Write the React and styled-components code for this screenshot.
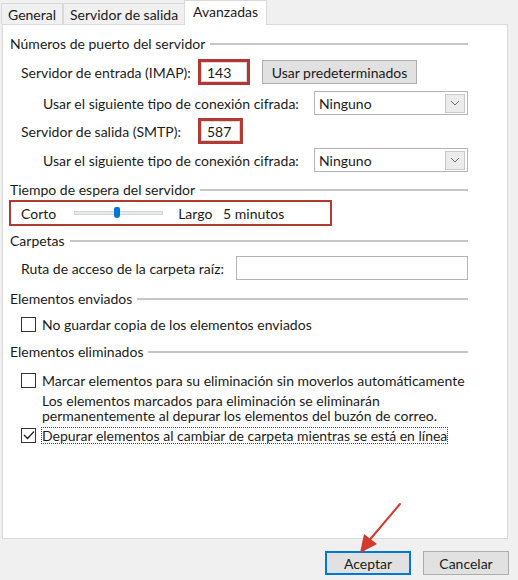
import React from 'react';
import styled, { createGlobalStyle } from 'styled-components';

const GlobalStyle = createGlobalStyle`
  html, body {
    margin: 0;
    padding: 0;
    background: #f0f0f0;
  }
  * { box-sizing: border-box; }
`;

const RED = '#b33a33';

// --- Frame ---
const Dialog = styled.div`
  position: relative;
  width: 518px;
  height: 580px;
  background: #f0f0f0;
  font-family: Lato, 'Noto Sans', sans-serif;
  font-size: 14px;
  color: #1b1b1b;
  overflow: hidden;
`;

const TabStrip = styled.div`
  display: flex;
  align-items: flex-end;
  height: 24px;
  padding-left: 1px;
`;

const Tab = styled.div`
  display: flex;
  align-items: center;
  height: ${(p) => (p.$active ? '25px' : '21px')};
  padding: 0 ${(p) => (p.$active ? '8px' : '6px')};
  padding-bottom: ${(p) => (p.$active ? '3px' : '0')};
  background: ${(p) => (p.$active ? '#ffffff' : '#f0f0f0')};
  border: 1px solid #d9d9d9;
  border-bottom: none;
  margin-left: ${(p) => (p.$active ? '-1px' : '0')};
  margin-bottom: ${(p) => (p.$active ? '-1px' : '0')};
  position: relative;
  z-index: ${(p) => (p.$active ? 2 : 1)};
  & + & { border-left: ${(p) => (p.$active ? '1px solid #d9d9d9' : 'none')}; }
`;

const Panel = styled.div`
  margin-left: 2px;
  width: 506px;
  height: 515px;
  background: #ffffff;
  border: 1px solid #d9d9d9;
  padding: 10px 39px 0 7px;
`;

// --- Group headers ---
const GroupHeader = styled.div`
  display: flex;
  align-items: center;
  gap: 5px;
  height: 16px;
  margin-top: ${(p) => p.$top || 0}px;
  &::after {
    content: '';
    flex: 1;
    height: 2px;
    background: #c6c6c6;
    margin-top: 1px;
  }
`;

// --- Rows ---
const Row = styled.div`
  display: flex;
  align-items: center;
  height: ${(p) => p.$h || 24}px;
  margin-top: ${(p) => p.$top || 0}px;
  padding-left: ${(p) => p.$indent || 0}px;
`;

const Label = styled.span`
  flex: none;
  width: ${(p) => (p.$w ? `${p.$w}px` : 'auto')};
  white-space: nowrap;
`;

const TextBox = styled.div`
  display: flex;
  align-items: center;
  width: ${(p) => p.$w}px;
  height: ${(p) => (p.$hl ? 26 : 24)}px;
  padding-left: ${(p) => (p.$hl ? 6 : 4)}px;
  background: #fff;
  border: ${(p) => (p.$hl ? `3px solid ${RED}` : '1px solid #b4b4b4')};
  box-shadow: ${(p) => (p.$hl ? 'inset 0 0 0 1px #d9d9d9' : 'none')};
`;

const PushButton = styled.div`
  display: flex;
  align-items: center;
  justify-content: center;
  width: ${(p) => p.$w}px;
  height: 24px;
  margin-left: ${(p) => p.$left || 0}px;
  background: #e1e1e1;
  border: ${(p) => (p.$default ? '2px solid #0078d7' : '1px solid #adadad')};
`;

const Select = styled.div`
  display: flex;
  align-items: center;
  justify-content: space-between;
  width: 155px;
  height: 24px;
  padding: 0 2px 0 4px;
  background: #fff;
  border: 1px solid #b4b4b4;
`;

const DropButton = styled.div`
  display: flex;
  align-items: center;
  justify-content: center;
  width: 20px;
  height: 19px;
  background: #ececec;
  border: 1px solid #c9c9c9;
  color: #707070;
`;

// --- Slider ---
const SliderGroup = styled.div`
  display: flex;
  align-items: center;
  width: 323px;
  height: 26px;
  margin: 3px 0 0 -1px;
  padding-left: 10px;
  border: 2px solid ${RED};
`;

const Track = styled.div`
  position: relative;
  width: 89px;
  height: 4px;
  margin: 0 15px 0 ${(p) => p.$gap}px;
  background: #e7eaea;
  border: 1px solid #d6d6d6;
`;

const Thumb = styled.div`
  position: absolute;
  top: -5px;
  width: 6px;
  height: 11px;
  border-radius: 2px 2px 3px 3px;
  background: #0078d7;
`;

// --- Check boxes ---
const CheckRow = styled.div`
  display: flex;
  align-items: center;
  gap: 5px;
  height: 18px;
  margin-top: ${(p) => p.$top || 0}px;
  padding-left: 11px;
`;

const Box = styled.div`
  display: flex;
  align-items: center;
  justify-content: center;
  flex: none;
  width: 15px;
  height: 15px;
  background: #fff;
  border: 1px solid #333;
`;

const CheckText = styled.span`
  white-space: nowrap;
  padding: 0 1px;
  outline: ${(p) => (p.$focus ? '1px dotted #444' : 'none')};
  outline-offset: -1px;
`;

const Note = styled.div`
  margin: 4px 0 0 32px;
  line-height: 15px;
`;

// --- Footer ---
const Footer = styled.div`
  display: flex;
  justify-content: flex-end;
  gap: 12px;
  padding: 12px 9px 0 0;
`;

const Arrow = styled.svg`
  position: absolute;
  left: 350px;
  top: 498px;
  pointer-events: none;
`;

const Chevron = () => (
  <svg width="10" height="6" viewBox="0 0 10 6">
    <path d="M1 1 L5 5 L9 1" fill="none" stroke="#6f6f6f" strokeWidth="1" />
  </svg>
);

const Tick = () => (
  <svg width="12" height="10" viewBox="0 0 12 10">
    <path d="M1 5 L4.5 8.5 L11 1.5" fill="none" stroke="#222" strokeWidth="1.3" />
  </svg>
);

export default function App() {
  return (
    <Dialog>
      <GlobalStyle />
      <TabStrip>
        <Tab>General</Tab>
        <Tab>Servidor de salida</Tab>
        <Tab $active>Avanzadas</Tab>
      </TabStrip>

      <Panel>
        <GroupHeader>Números de puerto del servidor</GroupHeader>
        <Row $h={26} $top={8} $indent={11}>
          <Label $w={177}>Servidor de entrada (IMAP):</Label>
          <TextBox $w={52} $hl>143</TextBox>
          <PushButton $w={155} $left={12}>Usar predeterminados</PushButton>
        </Row>
        <Row $top={6} $indent={33}>
          <Label $w={271}>Usar el siguiente tipo de conexión cifrada:</Label>
          <Select>Ninguno<DropButton><Chevron /></DropButton></Select>
        </Row>
        <Row $h={26} $top={3} $indent={11}>
          <Label $w={177}>Servidor de salida (SMTP):</Label>
          <TextBox $w={45} $hl>587</TextBox>
        </Row>
        <Row $top={4} $indent={33}>
          <Label $w={271}>Usar el siguiente tipo de conexión cifrada:</Label>
          <Select>Ninguno<DropButton><Chevron /></DropButton></Select>
        </Row>

        <GroupHeader $top={9}>Tiempo de espera del servidor</GroupHeader>
        <SliderGroup>
          <span>Corto</span>
          <Track $gap={18}><Thumb style={{ left: 39 }} /></Track>
          <span>Largo&nbsp;&nbsp;&nbsp;5 minutos</span>
        </SliderGroup>

        <GroupHeader $top={6}>Carpetas</GroupHeader>
        <Row $top={8} $indent={11}>
          <Label $w={215}>Ruta de acceso de la carpeta raíz:</Label>
          <TextBox $w={233} />
        </Row>

        <GroupHeader $top={10}>Elementos enviados</GroupHeader>
        <CheckRow $top={9}>
          <Box />
          <CheckText>No guardar copia de los elementos enviados</CheckText>
        </CheckRow>

        <GroupHeader $top={10}>Elementos eliminados</GroupHeader>
        <CheckRow $top={12}>
          <Box />
          <CheckText>Marcar elementos para su eliminación sin moverlos automáticamente</CheckText>
        </CheckRow>
        <Note>
          Los elementos marcados para eliminación se eliminarán<br />
          permanentemente al depurar los elementos del buzón de correo.
        </Note>
        <CheckRow $top={3}>
          <Box><Tick /></Box>
          <CheckText $focus>Depurar elementos al cambiar de carpeta mientras se está en línea</CheckText>
        </CheckRow>
      </Panel>

      <Footer>
        <PushButton $w={86} $default>Aceptar</PushButton>
        <PushButton $w={86}>Cancelar</PushButton>
      </Footer>

      <Arrow width="60" height="60" viewBox="0 0 60 60">
        <line x1="50" y1="6" x2="17" y2="45" stroke="#d23a2c" strokeWidth="2" strokeLinecap="round" />
        <polygon points="10,55 14,36 27,46" fill="#d23a2c" />
      </Arrow>
    </Dialog>
  );
}
